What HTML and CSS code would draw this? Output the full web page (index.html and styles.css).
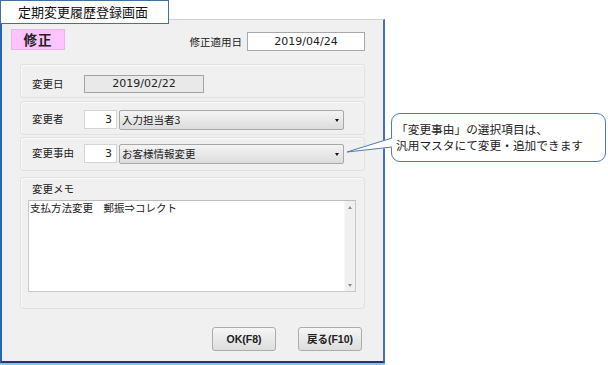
FILE: index.html
```html
<!DOCTYPE html>
<html lang="ja">
<head>
<meta charset="utf-8">
<title>定期変更履歴登録画面</title>
<link rel="stylesheet" href="styles.css">
</head>
<body>
<div class="stage">
  <div class="window">
    <div class="top-row">
      <div class="mode-badge">修正</div>
      <div class="apply-date">
        <span class="label">修正適用日</span>
        <div class="field field-white field-date">2019/04/24</div>
      </div>
    </div>

    <div class="groups">
      <div class="group group-date">
        <span class="label label-col">変更日</span>
        <div class="field field-gray field-change-date">2019/02/22</div>
      </div>
      <div class="group group-person">
        <span class="label label-col">変更者</span>
        <div class="field field-white field-num">3</div>
        <div class="combo"><span class="combo-text">入力担当者3</span><span class="combo-arrow"></span></div>
      </div>
      <div class="group group-reason">
        <span class="label label-col">変更事由</span>
        <div class="field field-white field-num">3</div>
        <div class="combo"><span class="combo-text">お客様情報変更</span><span class="combo-arrow"></span></div>
      </div>
      <div class="group group-memo">
        <span class="label memo-label">変更メモ</span>
        <div class="memo">
          <div class="memo-text">支払方法変更　郵振⇒コレクト</div>
          <div class="scrollbar">
            <span class="sb-arrow sb-up"></span>
            <span class="sb-arrow sb-down"></span>
          </div>
        </div>
      </div>
    </div>

    <div class="footer">
      <button class="btn">OK(F8)</button>
      <button class="btn">戻る(F10)</button>
    </div>
  </div>

  <div class="callout">
    <div class="callout-line">「変更事由」の選択項目は、</div>
    <div class="callout-line">汎用マスタにて変更・追加できます</div>
  </div>

  <div class="title-tab">定期変更履歴登録画面</div>

  <svg class="callout-tail" width="60" height="30" viewBox="0 0 60 30">
    <polygon points="7,22 52.6,7.8 52.6,17.4" fill="#ffffff"/>
    <polyline points="52,8 7,22 52,17" fill="none" stroke="#5279b0" stroke-width="1"/>
  </svg>
</div>
</body>
</html>
```

FILE: styles.css
```css
* { box-sizing: border-box; }

html, body {
  margin: 0;
  padding: 0;
  background: #ffffff;
}

body {
  font-family: "Noto Sans CJK JP", "Noto Sans", sans-serif;
  color: #222222;
}

.stage {
  position: relative;
  width: 608px;
  height: 365px;
  overflow: hidden;
  display: flex;
  align-items: flex-start;
}

/* ---------- dialog window ---------- */
.window {
  flex: none;
  width: 385px;
  height: 344px;
  margin-top: 19px;
  background: #f0f0f0;
  border-top: 1px solid #cfcfcf;
  border-left: 2px solid #2f62a6;
  border-right: 2px solid #4574ad;
  border-bottom: 2px solid #1d3b66;
  box-shadow: inset 1px 0 0 #f7f1d6, 0 2px 0 #72cdea;
  display: flex;
  flex-direction: column;
}

.label {
  font-size: 10.5px;
  line-height: 14px;
  color: #222222;
  white-space: nowrap;
}

.top-row {
  display: flex;
  align-items: flex-start;
  padding: 9px 18px 0 9px;
}

.mode-badge {
  width: 54px;
  height: 21px;
  background: #ffc4ff;
  border: 1px solid #e6b6e6;
  font-size: 13.5px;
  font-weight: bold;
  line-height: 19px;
  text-align: center;
  letter-spacing: 1px;
  color: #222222;
}

.apply-date {
  margin-left: auto;
  margin-top: 3px;
  display: flex;
  align-items: center;
  gap: 5px;
}

.field {
  font-family: "DejaVu Sans", "Noto Sans CJK JP", sans-serif;
  font-size: 11px;
  color: #222222;
  white-space: nowrap;
}

.field-white {
  background: #ffffff;
  border: 1px solid #a9a9a9;
}

.field-gray {
  background: #e9e9e9;
  border: 1px solid #a3a3a3;
}

.field-date {
  width: 118px;
  height: 19px;
  line-height: 17px;
  text-align: center;
}

/* ---------- groups ---------- */
.groups {
  margin: 13px 18px 0 18px;
  display: flex;
  flex-direction: column;
}

.group {
  background: #f0f0f0;
  border: 1px solid #e2e2e2;
  border-radius: 3px;
  box-shadow: inset 1px 1px 0 #fafafa;
  display: flex;
  align-items: flex-start;
  padding-left: 11px;
}

.label-col {
  width: 52px;
  margin-top: 2px;
}

.group-date {
  height: 34px;
  padding-top: 10px;
}

.group-person {
  height: 34px;
  margin-top: 3px;
  padding-top: 8px;
}

.group-reason {
  height: 34px;
  margin-top: 2px;
  padding-top: 6px;
}

.field-change-date {
  width: 120px;
  height: 18px;
  line-height: 16px;
  text-align: center;
}

.field-num {
  width: 33px;
  height: 19px;
  line-height: 17px;
  text-align: right;
  padding-right: 4px;
  border-color: #d4d4d4;
}

.combo {
  margin-left: 2px;
  width: 225px;
  height: 20px;
  border: 1px solid #a8a8a8;
  border-radius: 2px;
  background: linear-gradient(#f4f4f4, #e8e8e8 50%, #dcdcdc);
  display: flex;
  align-items: center;
  justify-content: space-between;
  padding: 0 4px 0 2px;
}

.combo-text {
  font-size: 10.5px;
  line-height: 14px;
  color: #222222;
}

.combo-arrow {
  width: 0;
  height: 0;
  border-left: 2.5px solid transparent;
  border-right: 2.5px solid transparent;
  border-top: 3px solid #111111;
}

.group-memo {
  height: 132px;
  margin-top: 6px;
  padding: 4px 0 0 7px;
  flex-direction: column;
}

.memo-label {
  margin-left: 4px;
}

.memo {
  margin-top: 4px;
  width: 328px;
  height: 92px;
  background: #ffffff;
  border: 1px solid #c8c8c8;
  border-top-color: #bcbcbc;
  display: flex;
}

.memo-text {
  flex: 1;
  font-size: 10.5px;
  line-height: 13px;
  padding: 0 0 0 1px;
  color: #222222;
  white-space: nowrap;
}

.scrollbar {
  width: 11px;
  background: #f0f0f0;
  border-left: 1px solid #f7f7f7;
  display: flex;
  flex-direction: column;
  justify-content: space-between;
  align-items: center;
  padding: 5px 0 4px;
}

.sb-arrow {
  width: 0;
  height: 0;
  border-left: 2.5px solid transparent;
  border-right: 2.5px solid transparent;
}

.sb-up { border-bottom: 3px solid #8a8a8a; }
.sb-down { border-top: 3px solid #8a8a8a; }

/* ---------- footer ---------- */
.footer {
  margin: 18px 21px 0 0;
  display: flex;
  justify-content: flex-end;
  gap: 22px;
}

.btn {
  width: 64px;
  height: 24px;
  padding: 0;
  border: 1px solid #acacac;
  border-radius: 3px;
  background: linear-gradient(#f6f6f6, #e9e9e9 50%, #dddddd);
  font-family: "Liberation Sans", "Noto Sans CJK JP", sans-serif;
  font-size: 10.5px;
  font-weight: bold;
  color: #222222;
  line-height: 22px;
}

/* ---------- callout ---------- */
.callout {
  flex: none;
  margin: 113px 0 0 6px;
  width: 215px;
  height: 49px;
  background: #ffffff;
  border: 1px solid #5279b0;
  border-radius: 9px;
  padding: 7px 4px 0 4px;
}

.callout-line {
  font-size: 11.7px;
  line-height: 16px;
  color: #222222;
  white-space: nowrap;
}

.callout-tail {
  position: absolute;
  left: 340px;
  top: 130px;
}

/* ---------- title tab ---------- */
.title-tab {
  position: absolute;
  left: 0;
  top: 0;
  width: 169px;
  height: 24px;
  background: #ffffff;
  border: 1px solid #41719c;
  padding-left: 17px;
  font-size: 13px;
  line-height: 22px;
  color: #111111;
  white-space: nowrap;
}
```
